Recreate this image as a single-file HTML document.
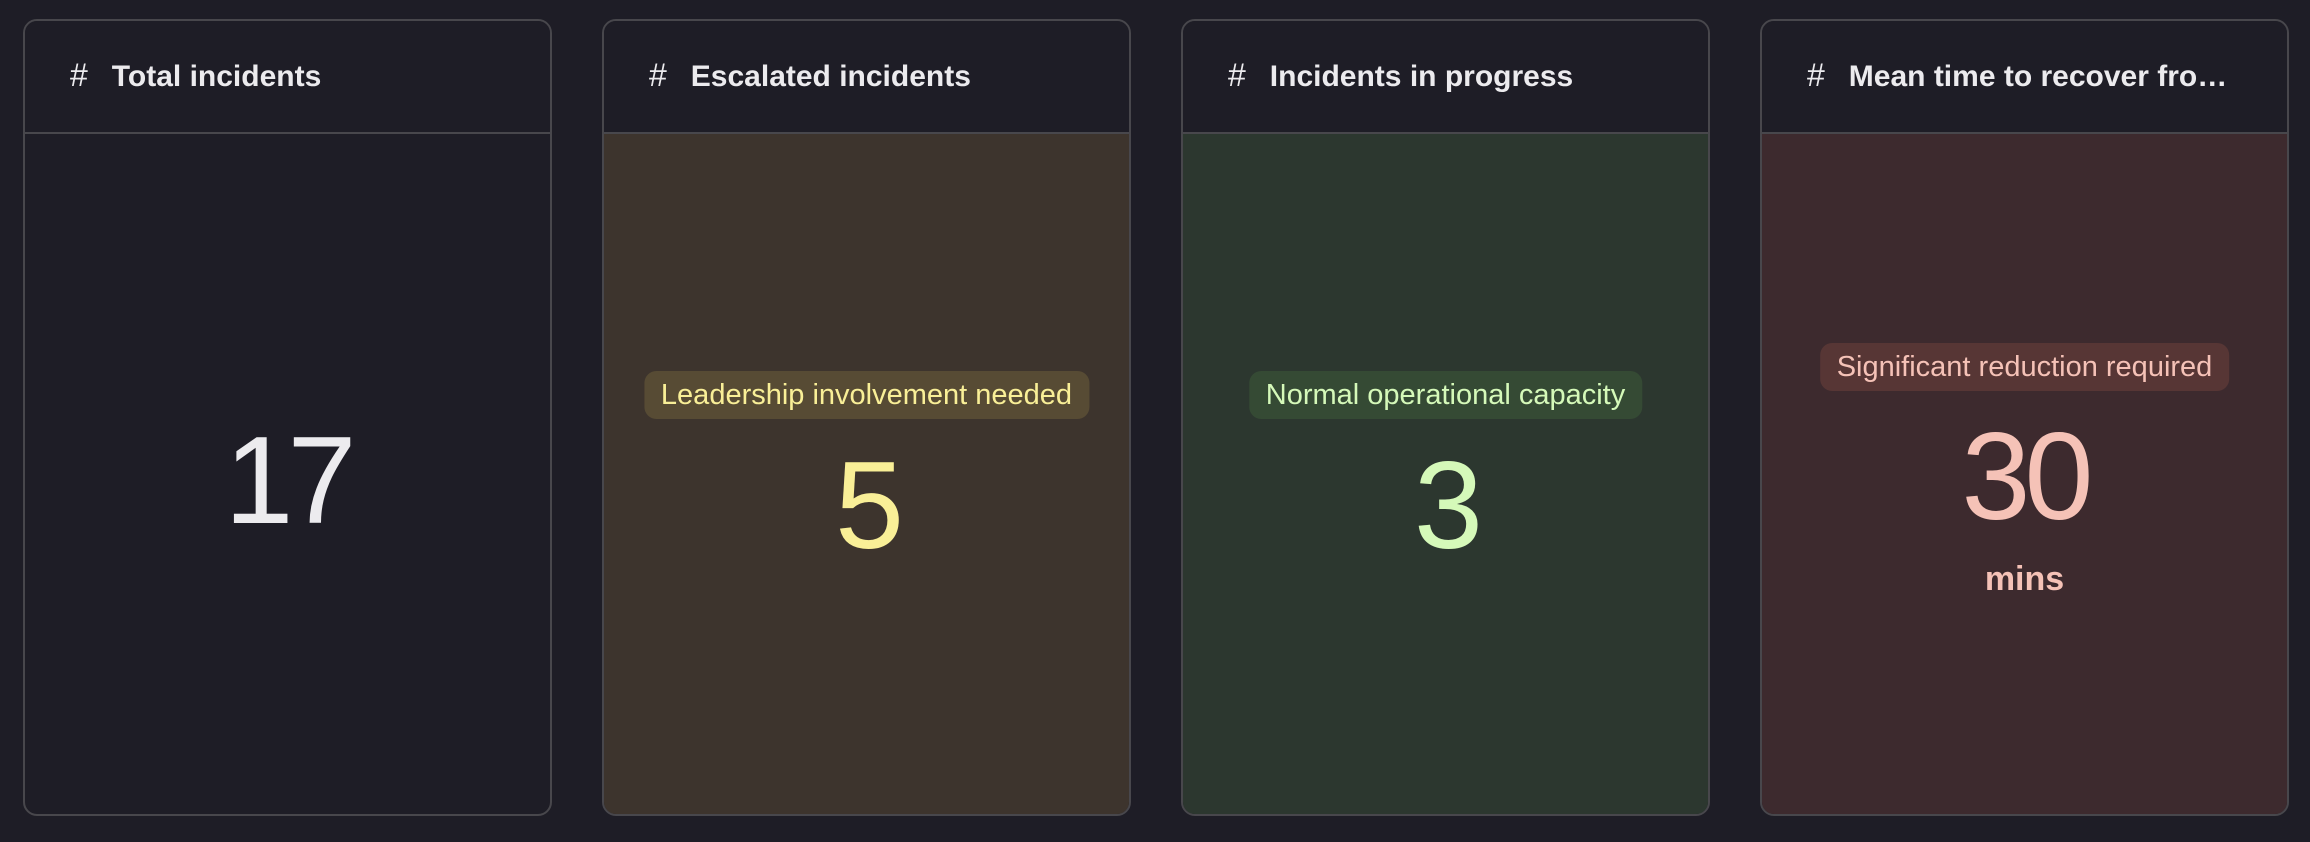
<!DOCTYPE html>
<html><head><meta charset="utf-8"><style>
*{margin:0;padding:0;box-sizing:border-box}
body{width:2310px;height:842px;background:#1e1d26;font-family:"Liberation Sans",sans-serif;position:relative;overflow:hidden}
.card{position:absolute;top:19px;width:529px;height:797px;border:2px solid #48474c;border-radius:14px;overflow:hidden;background:#1e1d26}
.hd{position:absolute;left:0;right:0;top:0;height:113px;border-bottom:2px solid #48474c;background:#1e1d26}
.t{position:absolute;left:45px;top:37px;font-size:30px;line-height:34px;color:#ecebee;white-space:nowrap;font-weight:bold}
.t .h{display:inline-block;margin-right:24px;font-size:32px;font-weight:normal}
.bd{position:absolute;left:0;right:0;top:113px;bottom:0}
.num{position:absolute;left:0;right:0;text-align:center;font-size:124px;line-height:124px;font-weight:300;letter-spacing:-6px}
.pill{position:absolute;left:50%;transform:translateX(-50%);height:48px;line-height:48px;padding:0 17px;border-radius:12px;font-size:29px;white-space:nowrap}
.mins{position:absolute;left:0;right:0;text-align:center;font-size:34px;line-height:34px;font-weight:bold}
</style></head><body>
<div class="card" style="left:23px">
 <div class="hd"><div class="t"><span class="h">#</span>Total incidents</div></div>
 <div class="num" style="top:398px;color:#ecebee">17</div>
</div>
<div class="card" style="left:602px">
 <div class="hd"><div class="t"><span class="h">#</span>Escalated incidents</div></div>
 <div class="bd" style="background:#3d342d"></div>
 <div class="pill" style="top:350px;background:#574b34;color:#f9ef97">Leadership involvement needed</div>
 <div class="num" style="top:423px;color:#f9ef97">5</div>
</div>
<div class="card" style="left:1181px">
 <div class="hd"><div class="t"><span class="h">#</span>Incidents in progress</div></div>
 <div class="bd" style="background:#2c372f"></div>
 <div class="pill" style="top:350px;background:#354a34;color:#d5f9b9">Normal operational capacity</div>
 <div class="num" style="top:423px;color:#d5f9b9">3</div>
</div>
<div class="card" style="left:1760px">
 <div class="hd"><div class="t" style="right:40px;overflow:hidden"><span class="h">#</span>Mean time to recover fro…</div></div>
 <div class="bd" style="background:#3d2a2e"></div>
 <div class="pill" style="top:322px;background:#573635;color:#f5c2b7">Significant reduction required</div>
 <div class="num" style="top:394px;color:#f5c2b7">30</div>
 <div class="mins" style="top:541px;color:#f5c2b7">mins</div>
</div>
</body></html>
